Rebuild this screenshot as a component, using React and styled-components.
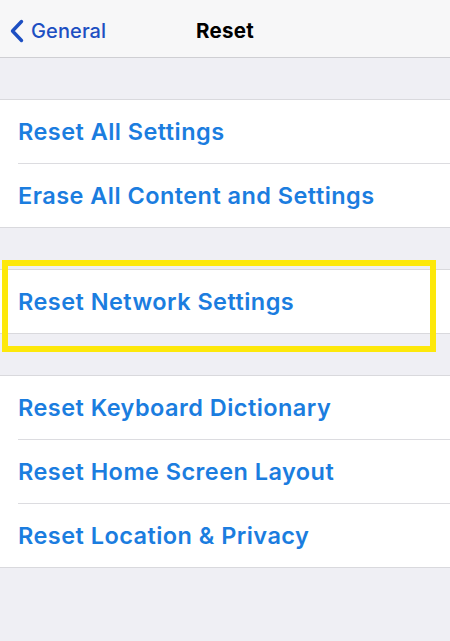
import React from "react";
import styled, { createGlobalStyle } from "styled-components";

const Global = createGlobalStyle`
  html, body { margin: 0; padding: 0; background: #efeff4; }
  body { font-family: Inter, "Noto Sans", sans-serif; }
  #root { min-height: 641px; }
`;

const Page = styled.div`
  width: 450px;
  min-height: 641px;
  background: #efeff4;
  overflow: hidden;
`;

const NavBar = styled.div`
  height: 58px;
  padding-top: 4px;
  background: #f7f7f8;
  border-bottom: 1px solid #cfcfd3;
  display: grid;
  grid-template-columns: 1fr auto 1fr;
  align-items: center;
  box-sizing: border-box;
`;

const Back = styled.div`
  display: flex;
  align-items: center;
  gap: 7px;
  padding-left: 9px;
  color: #1d4fc2;
  font-size: 20px;
  font-weight: 500;
  letter-spacing: 0.1px;
`;

const Title = styled.div`
  font-size: 20.5px;
  font-weight: 700;
  color: #000;
  letter-spacing: 0.3px;
`;

const Spacer = styled.div`
  height: ${(p) => p.$h}px;
`;

const Group = styled.div`
  background: #fff;
  border-top: 1px solid #d9d9dd;
  border-bottom: 1px solid #d9d9dd;
`;

const Row = styled.div`
  height: 63px;
  display: flex;
  align-items: center;
  padding-left: 18px;
  color: #1b7ddf;
  font-size: 23.5px;
  font-weight: 600;
  letter-spacing: 0.45px;
  & + & {
    border-top: 1px solid #dcdce0;
    margin-left: 18px;
    padding-left: 0;
  }
`;

const Highlight = styled.div`
  position: absolute;
  left: 2px;
  top: 260px;
  width: 434px;
  height: 92px;
  border: 6px solid #fde80a;
  box-sizing: border-box;
  pointer-events: none;
`;

const Frame = styled.div`
  position: relative;
`;

const Chevron = () => (
  <svg width="15" height="24" viewBox="0 0 15 24">
    <path d="M12.5 2.5 L3.5 12 L12.5 21.5" fill="none" stroke="#1d4fc2" strokeWidth="3.4" strokeLinecap="round" strokeLinejoin="round" />
  </svg>
);

const groups = [
  ["Reset All Settings", "Erase All Content and Settings"],
  ["Reset Network Settings"],
  ["Reset Keyboard Dictionary", "Reset Home Screen Layout", "Reset Location & Privacy"],
];

export default function App() {
  return (
    <Frame>
      <Global />
      <Page>
        <NavBar>
          <Back>
            <Chevron />
            General
          </Back>
          <Title>Reset</Title>
          <div />
        </NavBar>
        {groups.map((g, i) => (
          <React.Fragment key={i}>
            <Spacer $h={41} />
            <Group>
              {g.map((t) => (
                <Row key={t}>{t}</Row>
              ))}
            </Group>
          </React.Fragment>
        ))}
      </Page>
      <Highlight />
    </Frame>
  );
}
